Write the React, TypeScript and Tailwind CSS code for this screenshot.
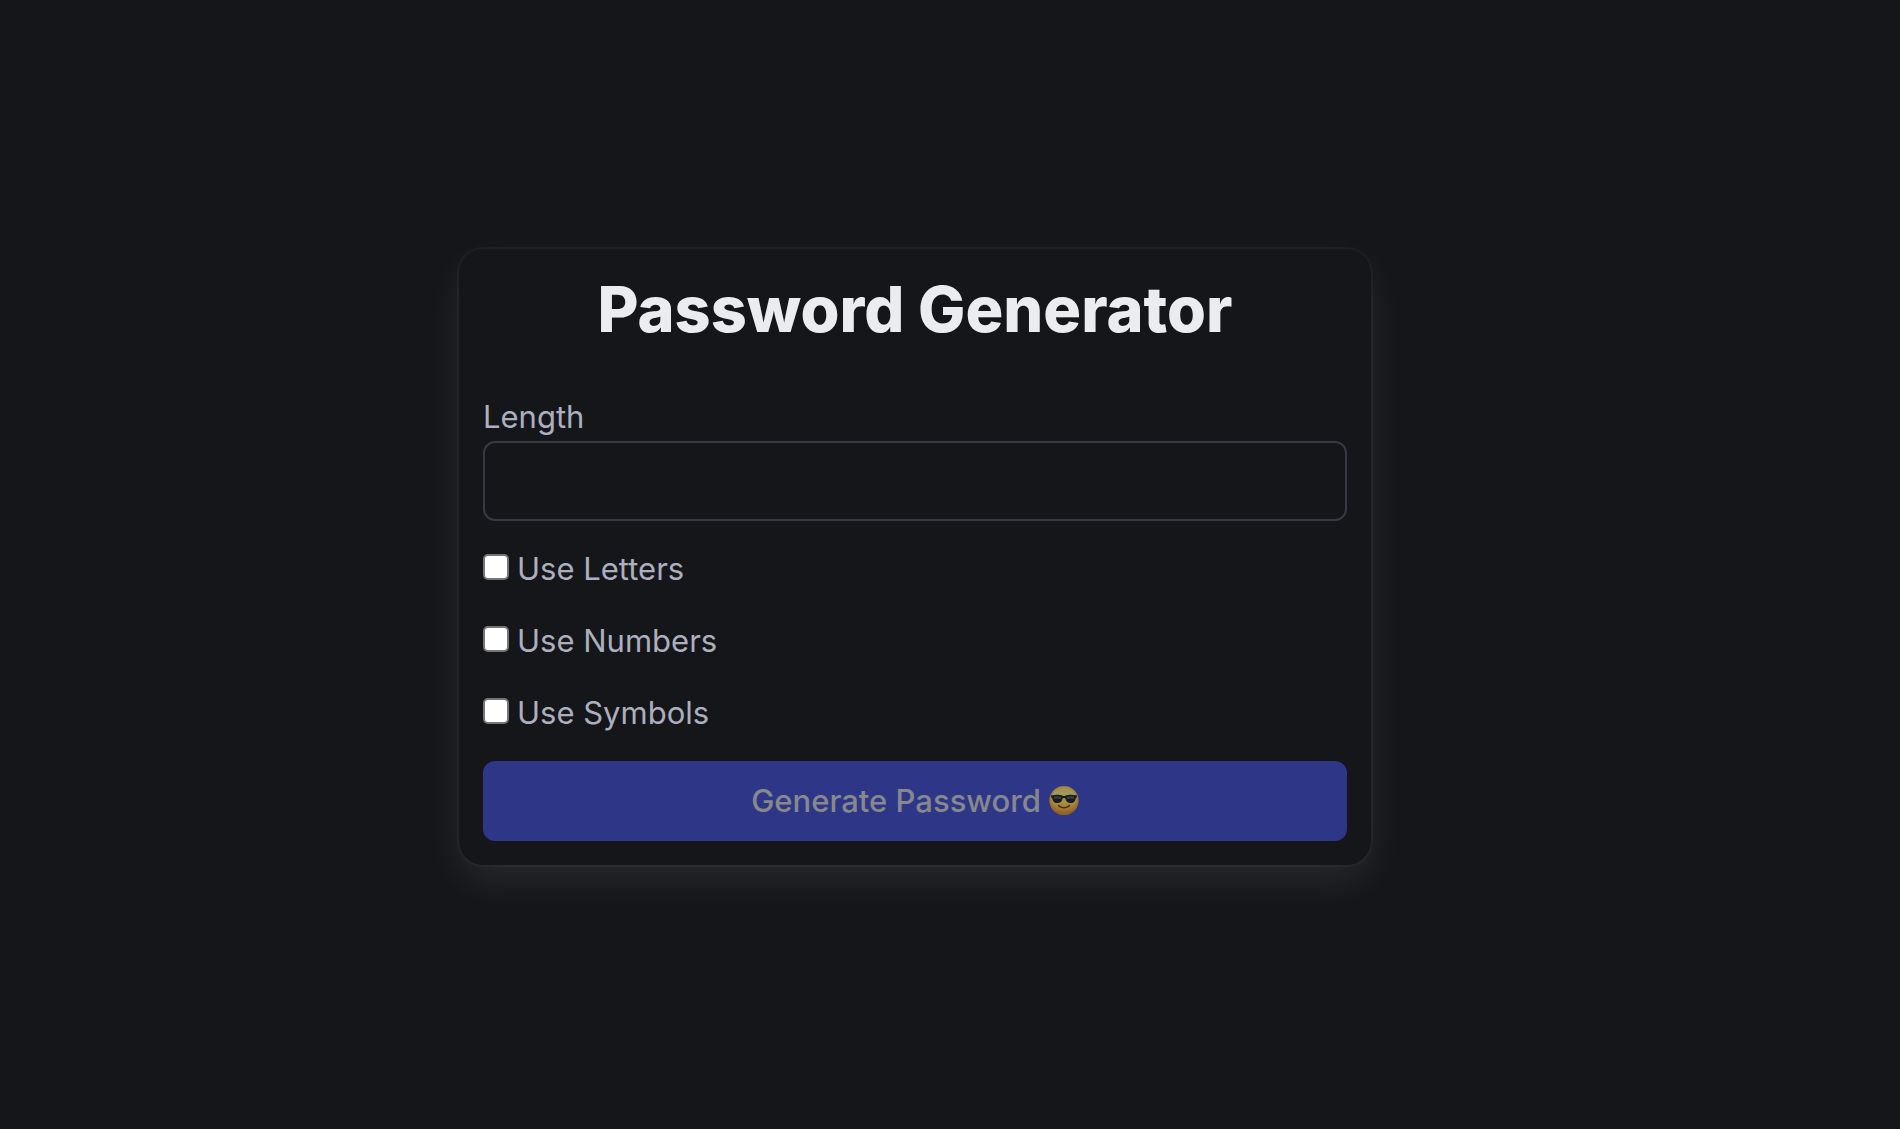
import { useState } from 'react';

const OPTIONS = ['Letters', 'Numbers', 'Symbols'];

function SunglassesFace() {
  return (
    <svg viewBox="0 0 30 30" className="size-[30px] shrink-0" aria-hidden="true">
      <defs>
        <linearGradient id="face" x1="0" y1="0" x2="0" y2="1">
          <stop offset="0" stopColor="#a08a48" />
          <stop offset="0.25" stopColor="#a39a58" />
          <stop offset="0.6" stopColor="#a98a3e" />
          <stop offset="1" stopColor="#966327" />
        </linearGradient>
        <radialGradient id="edge" cx="0.5" cy="0.45" r="0.55">
          <stop offset="0.7" stopColor="#8f5d22" stopOpacity="0" />
          <stop offset="1" stopColor="#8f5d22" stopOpacity="0.8" />
        </radialGradient>
      </defs>
      <circle cx="15" cy="14.5" r="14.5" fill="url(#face)" />
      <circle cx="15" cy="14.5" r="14.5" fill="url(#edge)" />
      <path
        d="M1.8 9.6C6 8.4 11 8.5 13.6 9.7C14.5 10.1 15.5 10.1 16.4 9.7C19 8.5 24 8.4 28.2 9.6L27.6 11.4C26.9 11.7 26.8 12.4 26.5 13.4C25.8 15.9 24.3 17 21.6 17C18.6 17 17.2 15.4 16.6 13C16.3 11.7 13.7 11.7 13.4 13C12.8 15.4 11.4 17 8.4 17C5.7 17 4.2 15.9 3.5 13.4C3.2 12.4 3.1 11.7 2.4 11.4Z"
        fill="#1b1c20"
      />
      <path d="M5 10.7C7.5 9.9 10.5 10.1 12.3 11L11.6 13.3C9.5 12.3 7 12.3 5.3 13.1Z" fill="#3a3c42" />
      <path d="M25 10.7C22.5 9.9 19.5 10.1 17.7 11L18.4 13.3C20.5 12.3 23 12.3 24.7 13.1Z" fill="#3a3c42" />
      <path d="M9.4 19.6C12.2 22.6 17.8 22.6 20.6 19.6" fill="none" stroke="#432b16" strokeWidth="1.4" strokeLinecap="round" />
    </svg>
  );
}

export default function App() {
  const [length, setLength] = useState('');
  const [used, setUsed] = useState<string[]>([]);

  const toggle = (name: string) =>
    setUsed((list) => (list.includes(name) ? list.filter((n) => n !== name) : [...list, name]));

  return (
    <main className="flex min-h-screen items-center justify-center bg-[#15161a] pr-[70px] pb-4 font-['Inter',sans-serif] text-[31px] leading-[48px] text-[#abafbf]">
      <form
        className="flex w-full max-w-[912px] flex-col gap-6 rounded-3xl bg-[#15161a] p-6 shadow-[0_0_0_2px_rgba(255,255,255,0.03),0_16px_40px_-3px_rgba(255,255,255,0.095)]"
        onSubmit={(e) => e.preventDefault()}
      >
        <h1 className="mb-6 text-center text-[63px] leading-[72px] font-extrabold text-[#ebecf0]">
          Password Generator
        </h1>
        <div className="flex flex-col">
          <label htmlFor="length">Length</label>
          <input
            id="length"
            type="number"
            value={length}
            onChange={(e) => setLength(e.target.value)}
            className="h-20 w-full rounded-xl border-2 border-[#373943] bg-transparent px-6 outline-none"
          />
        </div>
        {OPTIONS.map((name) => (
          <label key={name} className="flex items-baseline gap-2">
            <input
              type="checkbox"
              checked={used.includes(name)}
              onChange={() => toggle(name)}
              className="size-[26px] shrink-0 appearance-none rounded-[5px] border-2 border-[#767676] bg-white checked:bg-[#485fc7]"
            />
            Use {name}
          </label>
        ))}
        <button
          type="submit"
          disabled={!length || used.length === 0}
          className="flex h-20 items-center justify-center gap-2 rounded-xl bg-[#2e3787] font-medium text-[#87888e]"
        >
          Generate Password
          <SunglassesFace />
        </button>
      </form>
    </main>
  );
}
